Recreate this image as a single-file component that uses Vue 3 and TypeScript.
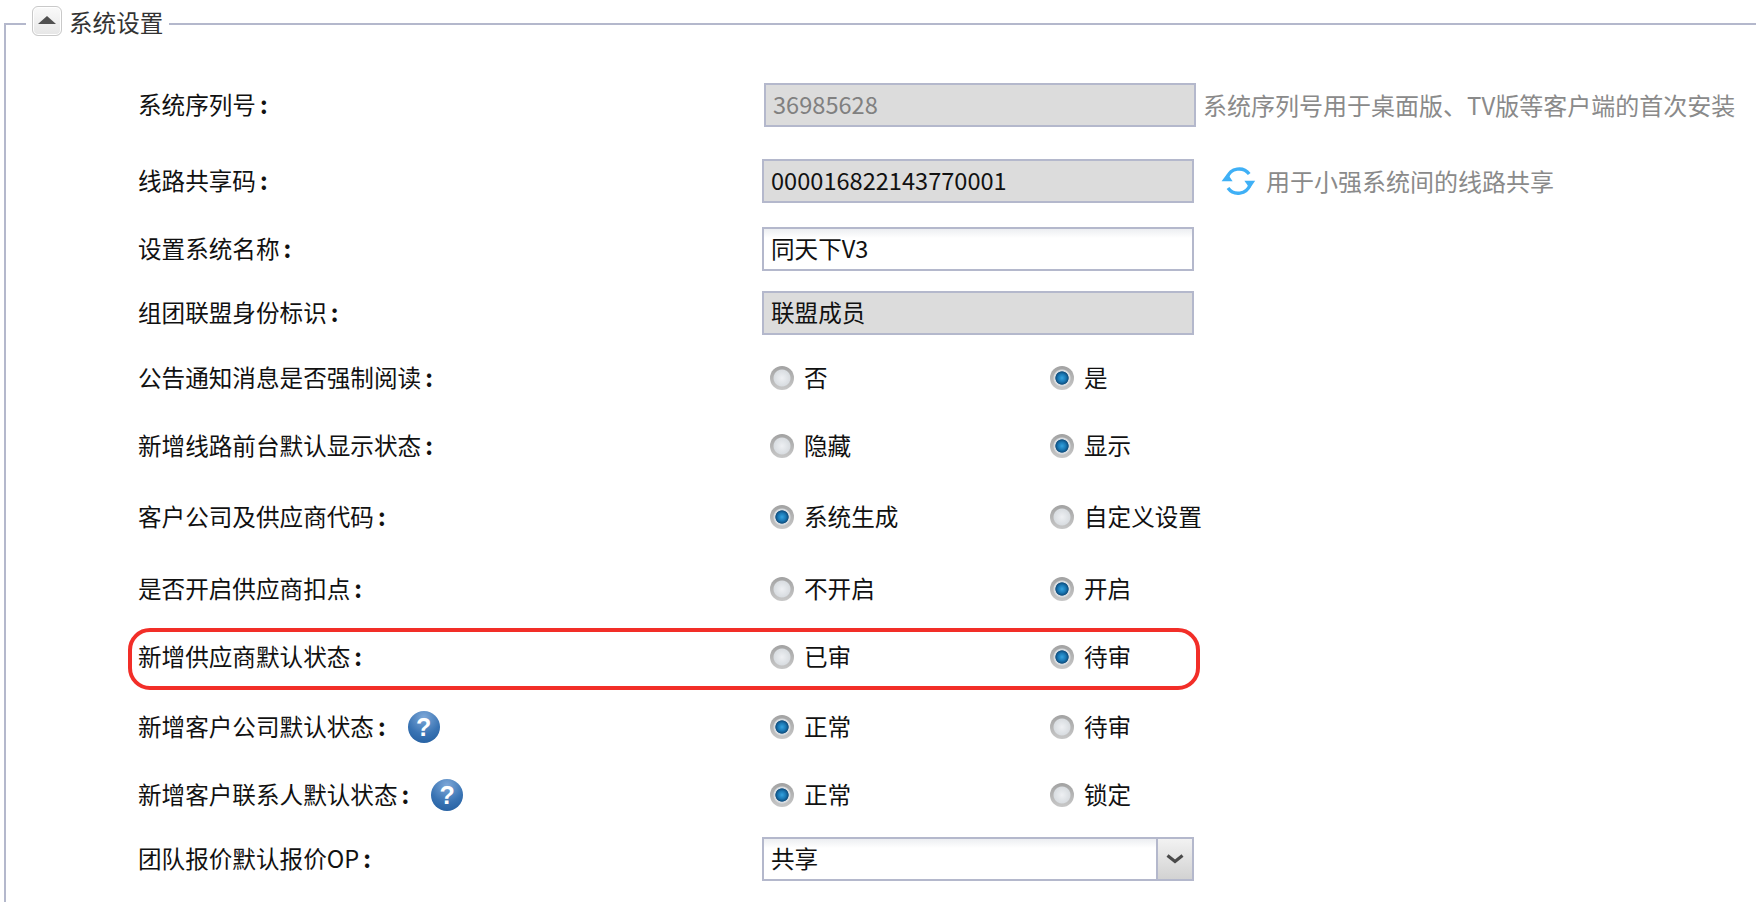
<script setup lang="ts">
interface RadioRow {
  label: string
  help?: boolean
  first: string
  second: string
  checked: 0 | 1
}

const radioRows: RadioRow[] = [
  { label: '公告通知消息是否强制阅读', first: '否', second: '是', checked: 1 },
  { label: '新增线路前台默认显示状态', first: '隐藏', second: '显示', checked: 1 },
  { label: '客户公司及供应商代码', first: '系统生成', second: '自定义设置', checked: 0 },
  { label: '是否开启供应商扣点', first: '不开启', second: '开启', checked: 1 },
  { label: '新增供应商默认状态', first: '已审', second: '待审', checked: 1 },
  { label: '新增客户公司默认状态', help: true, first: '正常', second: '待审', checked: 0 },
  { label: '新增客户联系人默认状态', help: true, first: '正常', second: '锁定', checked: 0 },
]
</script>

<template>
  <div class="page">
    <fieldset class="panel">
      <legend class="legend">
        <span class="toggle"><i class="tri"></i></span>
        <span class="legend-text">系统设置</span>
      </legend>

      <div class="form">
        <div class="label">系统序列号<span class="colon">:</span></div>
        <div class="field">
          <div class="box grey muted shift">36985628</div>
          <span class="hint first-hint">系统序列号用于桌面版、TV版等客户端的首次安装</span>
        </div>

        <div class="label">线路共享码<span class="colon">:</span></div>
        <div class="field">
          <div class="box grey">000016822143770001</div>
          <svg class="refresh" viewBox="0 0 35 32" width="35" height="32" fill="none">
            <path d="M6.2 12.5A12.6 12.6 0 0 1 28.2 9" stroke="#3fb0f6" stroke-width="3.4" />
            <path d="M29 20A12.6 12.6 0 0 1 7 23" stroke="#3fb0f6" stroke-width="3.4" />
            <path d="M0.6 16.2L6.4 8.6L11.6 16.2Z" fill="#3fb0f6" />
            <path d="M23.4 15.8L34.2 15.8L28.8 23.6Z" fill="#3fb0f6" />
          </svg>
          <span class="hint">用于小强系统间的线路共享</span>
        </div>

        <div class="label">设置系统名称<span class="colon">:</span></div>
        <div class="field"><div class="box white">同天下V3</div></div>

        <div class="label">组团联盟身份标识<span class="colon">:</span></div>
        <div class="field"><div class="box grey">联盟成员</div></div>

        <template v-for="(row, i) in radioRows" :key="row.label">
          <div class="label">
            {{ row.label }}<span class="colon">:</span>
            <span v-if="row.help" class="help">?</span>
          </div>
          <div class="field radios">
            <label class="opt">
              <input type="radio" :name="'r' + i" class="radio" :checked="row.checked === 0" />
              <span class="opt-text">{{ row.first }}</span>
            </label>
            <label class="opt">
              <input type="radio" :name="'r' + i" class="radio" :checked="row.checked === 1" />
              <span class="opt-text">{{ row.second }}</span>
            </label>
          </div>
        </template>

        <div class="label">团队报价默认报价OP<span class="colon">:</span></div>
        <div class="field">
          <div class="box white select">
            <span class="select-value">共享</span>
            <span class="select-btn">
              <svg viewBox="0 0 18 11" width="18" height="11">
                <path d="M1.5 1.5L9 7.5L16.5 1.5" fill="none" stroke="#4a4a4a" stroke-width="3.2" />
              </svg>
            </span>
          </div>
        </div>
      </div>
    </fieldset>

    <div class="callout"></div>
  </div>
</template>

<style>
html,
body {
  margin: 0;
  background: #fff;
}
</style>

<style scoped>
.page {
  position: relative;
  height: 902px;
  overflow: hidden;
  padding-top: 6px;
  box-sizing: border-box;
  font-family: "Noto Sans CJK SC", "Liberation Sans", sans-serif;
  font-size: 23.6px;
  color: #111;
}
.panel {
  width: 1800px;
  height: 1000px;
  box-sizing: border-box;
  margin: 0 0 0 4px;
  padding: 41px 0 0 0;
  border: 2px solid #b4b8cc;
  min-width: 0;
}
.legend {
  display: flex;
  align-items: flex-start;
  height: 36px;
  margin-left: 20px;
  padding: 0 6px;
  box-sizing: border-box;
}
.toggle {
  display: flex;
  align-items: center;
  justify-content: center;
  width: 30px;
  height: 30px;
  box-sizing: border-box;
  border: 1px solid #c9c9c9;
  border-radius: 6px;
  background: linear-gradient(#fafafa, #e6e6e6);
  box-shadow: inset 0 0 0 1px #fff;
}
.tri {
  width: 0;
  height: 0;
  margin-top: -2px;
  border-left: 9px solid transparent;
  border-right: 9px solid transparent;
  border-bottom: 8px solid #505050;
}
.legend-text {
  margin-left: 7px;
  line-height: 32px;
  color: #333;
}
.form {
  display: grid;
  padding-left: 132px;
  grid-template-columns: 624px 1fr;
  grid-template-rows: 76px 68px 64px 65px 68px 71px 72px 68px 70px 68px 64px 44px;
}
.label,
.field {
  height: 44px;
  display: flex;
  align-items: center;
  line-height: 44px;
}
.label {
  padding-bottom: 2px;
  box-sizing: border-box;
  white-space: pre;
}
.colon {
  margin-left: 4px;
  font-weight: 700;
}
.help {
  display: block;
  width: 32px;
  height: 32px;
  margin-left: 22px;
  margin-top: 1px;
  border-radius: 50%;
  background: radial-gradient(circle at 50% 20%, #7ea8d8, #3a74b4 55%, #1f5a9c);
  color: #fff;
  font-family: "Liberation Sans", sans-serif;
  font-weight: 700;
  font-size: 25px;
  line-height: 32px;
  text-align: center;
}
.box {
  width: 432px;
  height: 44px;
  flex: none;
  box-sizing: border-box;
  border: 2px solid #b4b8cc;
  padding: 0 7px;
  line-height: 39px;
  white-space: nowrap;
}
.grey {
  background: #dcdcdc;
}
.white {
  background: linear-gradient(#eceef1, #fff 9px);
}
.muted {
  color: #808080;
}
.shift {
  margin-left: 2px;
}
.hint {
  color: #8a8a8a;
  font-size: 24px;
  white-space: nowrap;
  margin-left: 10px;
}
.first-hint {
  margin-left: 7px;
}
.refresh {
  flex: none;
  margin-left: 27px;
}
.radios {
  padding-left: 8px;
  box-sizing: border-box;
}
.opt {
  width: 280px;
  display: flex;
  align-items: center;
  gap: 10px;
}
.opt-text {
  margin-top: -3px;
}
.radio {
  appearance: none;
  flex: none;
  width: 24px;
  height: 24px;
  margin: 0;
  border-radius: 50%;
  background:
    radial-gradient(circle 9px at 50% 50%, #eef0f3 0, #d9dde1 88%, transparent 100%),
    linear-gradient(#a2a2a2, #c8c8c8);
}
.radio:checked {
  background:
    radial-gradient(circle 7px at 50% 50%, #34a3e0 0, #1a78b4 55%, #0e4f80 90%, transparent 100%),
    radial-gradient(circle 9px at 50% 50%, #dfe2e6 0, #d9dde1 88%, transparent 100%),
    linear-gradient(#a2a2a2, #c8c8c8);
}
.select {
  display: flex;
  padding: 0;
  position: relative;
}
.select-value {
  flex: 1;
  padding-left: 7px;
}
.select-btn {
  width: 34px;
  display: flex;
  align-items: center;
  justify-content: center;
  border-left: 2px solid #b4b8cc;
  background: linear-gradient(#f2f2f2, #d2d2d2);
}
.callout {
  position: absolute;
  left: 128px;
  top: 628px;
  width: 1072px;
  height: 62px;
  box-sizing: border-box;
  border: 4px solid #f22e28;
  border-radius: 22px;
}
</style>
